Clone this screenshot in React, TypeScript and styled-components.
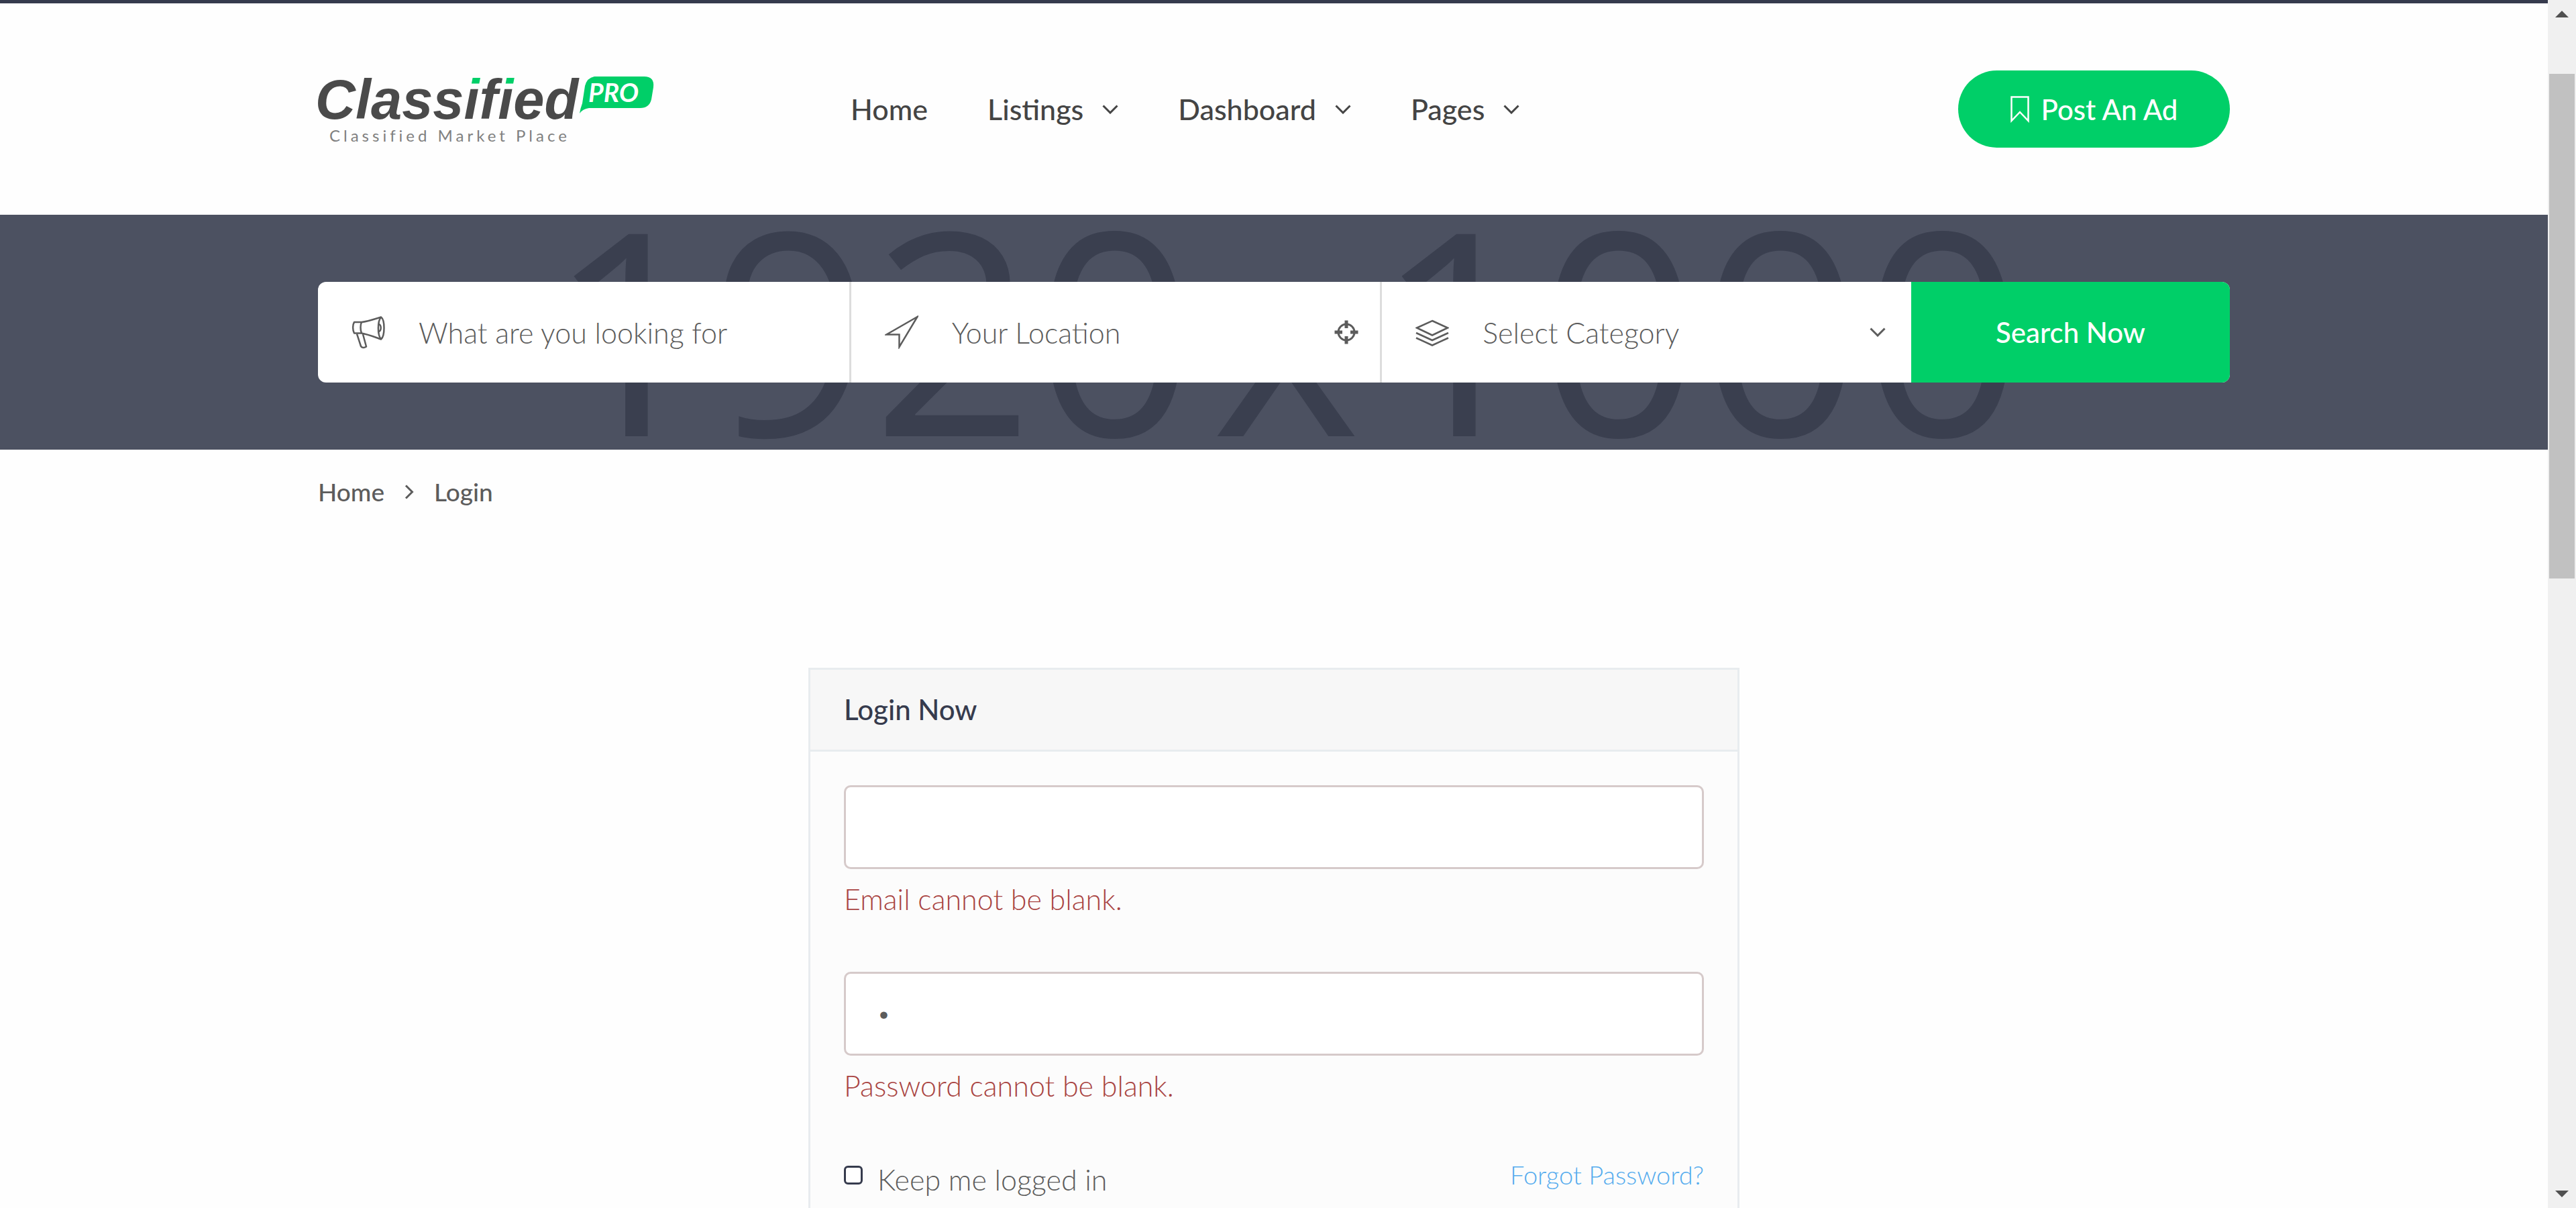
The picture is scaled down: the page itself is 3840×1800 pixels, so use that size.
import React from "react";
import styled, { createGlobalStyle } from "styled-components";

const colors = {
  green: "#00cf68",
  navy: "#363b4d",
  band: "#4c5161",
  bandText: "#3a3f4f",
  text: "#444444",
  muted: "#5c5c5c",
  danger: "#a94442",
  dangerBorder: "#d6caca",
  line: "#e8ecef",
  link: "#55acee",
};

const fontStack = '"Lato", "Open Sans", sans-serif';

const GlobalStyle = createGlobalStyle`
  *, *::before, *::after { box-sizing: border-box; }
  body {
    margin: 0;
    background: #fefefe;
    color: ${colors.muted};
    font-family: ${fontStack};
    font-size: 43px;
    font-weight: 300;
  }
  button, input, select { font: inherit; color: inherit; }
`;

const Shell = styled.div`
  display: flex;
  height: 100vh;
  overflow: hidden;
`;

const Page = styled.div`
  flex: 1;
  min-width: 0;
  height: 100%;
  overflow: hidden;
  border-top: 5px solid ${colors.navy};
`;

const Container = styled.div`
  width: calc(100% - 80px);
  max-width: 2850px;
  margin: 0 auto;
`;

const HeaderInner = styled(Container)`
  display: flex;
  align-items: center;
  padding: 100px 0;
`;

const LogoLink = styled.a`
  display: block;
  width: 500px;
  flex: none;
  margin-right: 294px;
  svg { display: block; width: 100%; overflow: visible; }
`;

const LogoName = styled.text`
  font-family: "Liberation Sans", sans-serif;
  font-weight: 700;
  font-style: italic;
  font-size: 83px;
  fill: #4a4a4a;
`;

const LogoBadge = styled.text`
  font-family: ${fontStack};
  font-weight: 700;
  font-style: italic;
  font-size: 39px;
  fill: #ffffff;
`;

const LogoTagline = styled.text`
  font-family: ${fontStack};
  font-weight: 400;
  font-size: 24px;
  letter-spacing: 5px;
  fill: #808080;
`;

const Nav = styled.nav`
  display: flex;
  gap: 89px;
  margin-right: auto;
`;

const NavLink = styled.a`
  display: flex;
  align-items: center;
  gap: 28px;
  color: ${colors.text};
  font-weight: 500;
  line-height: 60px;
  text-decoration: none;
`;

const PostButton = styled.button`
  display: flex;
  align-items: center;
  justify-content: center;
  gap: 18px;
  width: 405px;
  height: 115px;
  border: 0;
  border-radius: 60px;
  background: ${colors.green};
  color: #ffffff;
  font-size: 42px;
  font-weight: 500;
`;

const Band = styled.section`
  position: relative;
  padding: 100px 0;
  background: ${colors.band};
`;

const Backdrop = styled.div`
  position: absolute;
  inset: 0;
  display: flex;
  align-items: center;
  justify-content: center;
  gap: 24px;
  padding-left: 36px;
  padding-bottom: 16px;
  overflow: hidden;
  color: ${colors.bandText};
  font-family: "Open Sans", "Noto Sans", sans-serif;
  font-size: 422px;
  font-weight: 500;
  line-height: 350px;
`;

const SearchBar = styled(Container).attrs({ as: "form" })`
  position: relative;
  display: grid;
  grid-template-columns: 5fr 5fr 5fr 3fr;
  height: 150px;
  border-radius: 12px;
  overflow: hidden;
  background: #ffffff;
`;

const Field = styled.label<{ $end?: number }>`
  min-width: 0;
  height: 150px;
  display: flex;
  align-items: center;
  padding-left: 50px;
  padding-right: ${(p) => p.$end ?? 36}px;
  & + & { border-left: 3px solid #dddddd; }
`;

const fieldControl = `
  flex: 1;
  min-width: 0;
  height: 100%;
  margin-left: 50px;
  padding: 0;
  border: 0;
  outline: 0;
  background: transparent;
`;

const FieldInput = styled.input`
  ${fieldControl}
  &::placeholder { color: ${colors.muted}; opacity: 1; }
`;

const FieldSelect = styled.select`
  ${fieldControl}
  appearance: none;
`;

const LocateButton = styled.button`
  display: flex;
  padding: 0;
  border: 0;
  background: none;
`;

const SearchButton = styled.button`
  border: 0;
  background: ${colors.green};
  color: #ffffff;
  font-size: 42px;
  font-weight: 500;
`;

const Breadcrumb = styled(Container).attrs({ as: "nav" })`
  display: flex;
  align-items: center;
  gap: 30px;
  padding: 39px 0 41px;
  font-size: 37px;
  font-weight: 500;
  line-height: 48px;
`;

const Crumb = styled.a`
  color: ${colors.muted};
  text-decoration: none;
`;

const Card = styled.main`
  width: calc(100% - 80px);
  max-width: 1388px;
  margin: 197px auto 0;
  border: 3px solid ${colors.line};
  background: #fcfcfc;
`;

const CardTitle = styled.h1`
  margin: 0;
  padding: 30px 50px;
  border-bottom: 3px solid ${colors.line};
  background: #f7f7f7;
  color: ${colors.navy};
  font-size: 42px;
  font-weight: 500;
  line-height: 59px;
`;

const LoginForm = styled.form`
  display: flex;
  flex-direction: column;
  gap: 78px;
  padding: 50px 50px 200px;
`;

const FormGroup = styled.div`
  display: flex;
  flex-direction: column;
  gap: 15px;
`;

const TextBox = styled.input`
  width: 100%;
  height: 125px;
  padding: 0 46px 4px;
  border: 3px solid ${colors.dangerBorder};
  border-radius: 10px;
  outline: 0;
  background: #ffffff;
  font-size: 36px;
`;

const ErrorText = styled.p`
  margin: 0;
  color: ${colors.danger};
  line-height: 60px;
`;

const OptionsRow = styled.div`
  display: flex;
  justify-content: space-between;
  align-items: flex-start;
`;

const RememberLabel = styled.label`
  display: flex;
  align-items: flex-start;
  gap: 22px;
  line-height: 64px;
`;

const CheckBox = styled.input`
  appearance: none;
  width: 28px;
  height: 28px;
  margin: 11px 0 0;
  border: 3px solid ${colors.navy};
  border-radius: 6px;
  background: #ffffff;
`;

const ForgotLink = styled.a`
  color: ${colors.link};
  font-size: 38px;
  line-height: 48px;
  text-decoration: none;
`;

const ScrollRail = styled.div`
  flex: none;
  display: flex;
  flex-direction: column;
  align-items: center;
  justify-content: space-between;
  width: 42px;
  background: #f0f0f0;
`;

const RailTrack = styled.div`
  flex: 1;
  width: 38px;
  padding-top: 68px;
`;

const RailThumb = styled.div`
  height: 752px;
  background: #c1c1c1;
`;

const RailButton = styled.button`
  display: flex;
  align-items: center;
  justify-content: center;
  width: 42px;
  height: 42px;
  padding: 0;
  border: 0;
  background: none;
`;

const Chevron = ({ direction = "down" }: { direction?: "down" | "right" }) =>
  direction === "down" ? (
    <svg width="24" height="14" viewBox="0 0 24 14" fill="none" stroke="currentColor" strokeWidth="3" aria-hidden="true">
      <path d="M1.5 1.5 12 12 22.5 1.5" />
    </svg>
  ) : (
    <svg width="14" height="22" viewBox="0 0 14 22" fill="none" stroke="currentColor" strokeWidth="3" aria-hidden="true">
      <path d="M2 1.5 11.500 11 2 20.500" />
    </svg>
  );

const BookmarkIcon = () => (
  <svg width="28" height="40" viewBox="0 0 28 40" fill="none" stroke="currentColor" strokeWidth="2.500" aria-hidden="true">
    <path d="M1.500 1.500h25v35.500L14 24 1.500 37z" />
  </svg>
);

const MegaphoneIcon = () => (
  <svg width="50" height="50" viewBox="0 0 50 50" fill="none" stroke="currentColor" strokeWidth="2.500" strokeLinejoin="round" aria-hidden="true">
    <path d="M4 10C1.500 14 1.500 22 4 26.500L15 26.500C24 28 34 32 44 35.500C50 30 50 7 44 2.500C34 5.500 24 9 15 10Z" />
    <path d="M15 10C13 14 13 22 15 26.500M44 2.500C38.500 9 38.500 29 44 35.500M40 13C45 12.500 45 24.500 40 24" />
    <path d="M8 27.500 14 46C15.500 48.500 19 48.500 22 46.500L17 28" />
  </svg>
);

const PlaneIcon = () => (
  <svg width="50" height="50" viewBox="0 0 50 50" fill="none" stroke="currentColor" strokeWidth="2.500" aria-hidden="true">
    <path d="M48.500 2 2.500 28.500H21.500V47Z" />
  </svg>
);

const LayersIcon = () => (
  <svg width="50" height="50" viewBox="0 0 50 50" fill="none" stroke="currentColor" strokeWidth="2.500" aria-hidden="true">
    <path d="M25 8 48 18.500 25 29.500 2 18.500Z" />
    <path d="M1 26 25 37 49 26M1 33.500 25 44.500 49 33.500" />
  </svg>
);

const TargetIcon = () => (
  <svg width="36" height="36" viewBox="0 0 36 36" fill="none" stroke="currentColor" aria-hidden="true">
    <circle cx="18" cy="18" r="12" strokeWidth="3" />
    <path d="M18 0.500V12M18 24V35.500M0.500 18H12M24 18H35.500" strokeWidth="5" />
  </svg>
);

const Logo = () => (
  <svg viewBox="0 0 500 98" role="img" aria-label="Classified Pro">
    <defs>
      <linearGradient id="dotted" gradientUnits="userSpaceOnUse" x1="0" y1="0" x2="0" y2="98">
        <stop offset="0.150" stopColor={colors.green} />
        <stop offset="0.150" stopColor="#4a4a4a" />
      </linearGradient>
    </defs>
    <LogoName x="-4" y="63">
      Class<tspan fill="url(#dotted)">i</tspan>f<tspan fill="url(#dotted)">i</tspan>ed
    </LogoName>
    <path
      d="M412 0H486Q502 0 500 16L497 34Q494 47 480 47H404Q395 48 390 55Q391 48 394 40L398 14Q401 2 412 0Z"
      fill={colors.green}
    />
    <LogoBadge x="403" y="38">PRO</LogoBadge>
    <LogoTagline x="17" y="97">Classified Market Place</LogoTagline>
  </svg>
);

const menu = [
  { label: "Home", hasMenu: false },
  { label: "Listings", hasMenu: true },
  { label: "Dashboard", hasMenu: true },
  { label: "Pages", hasMenu: true },
];

export default function App() {
  return (
    <>
      <GlobalStyle />
      <Shell>
        <Page>
          <header>
            <HeaderInner>
              <LogoLink href="#">
                <Logo />
              </LogoLink>
              <Nav>
                {menu.map((item) => (
                  <NavLink key={item.label} href="#">
                    {item.label}
                    {item.hasMenu && <Chevron />}
                  </NavLink>
                ))}
              </Nav>
              <PostButton type="button">
                <BookmarkIcon />
                Post An Ad
              </PostButton>
            </HeaderInner>
          </header>

          <Band>
            <Backdrop aria-hidden="true">
              <span>1920</span>
              <span>x</span>
              <span>1000</span>
            </Backdrop>
            <SearchBar>
              <Field>
                <MegaphoneIcon />
                <FieldInput type="text" placeholder="What are you looking for" aria-label="What are you looking for" />
              </Field>
              <Field $end={32}>
                <PlaneIcon />
                <FieldInput type="text" placeholder="Your Location" aria-label="Your Location" />
                <LocateButton type="button" aria-label="Use my location">
                  <TargetIcon />
                </LocateButton>
              </Field>
              <Field $end={38}>
                <LayersIcon />
                <FieldSelect aria-label="Category" defaultValue="">
                  <option value="">Select Category</option>
                </FieldSelect>
                <Chevron />
              </Field>
              <SearchButton type="submit">Search Now</SearchButton>
            </SearchBar>
          </Band>

          <Breadcrumb aria-label="Breadcrumb">
            <Crumb href="#">Home</Crumb>
            <Chevron direction="right" />
            <Crumb href="#">Login</Crumb>
          </Breadcrumb>

          <Card>
            <CardTitle>Login Now</CardTitle>
            <LoginForm>
              <FormGroup>
                <TextBox type="email" aria-label="Email" aria-describedby="email-error" />
                <ErrorText id="email-error">Email cannot be blank.</ErrorText>
              </FormGroup>
              <FormGroup>
                <TextBox type="password" aria-label="Password" aria-describedby="password-error" defaultValue="a" />
                <ErrorText id="password-error">Password cannot be blank.</ErrorText>
              </FormGroup>
              <OptionsRow>
                <RememberLabel>
                  <CheckBox type="checkbox" />
                  Keep me logged in
                </RememberLabel>
                <ForgotLink href="#">Forgot Password?</ForgotLink>
              </OptionsRow>
            </LoginForm>
          </Card>
        </Page>

        <ScrollRail>
          <RailButton type="button" aria-label="Scroll up">
            <svg width="20" height="10" viewBox="0 0 20 10" fill="#505050" aria-hidden="true">
              <path d="M10 0 20 10H0Z" />
            </svg>
          </RailButton>
          <RailTrack>
            <RailThumb />
          </RailTrack>
          <RailButton type="button" aria-label="Scroll down">
            <svg width="20" height="10" viewBox="0 0 20 10" fill="#505050" aria-hidden="true">
              <path d="M0 0H20L10 10Z" />
            </svg>
          </RailButton>
        </ScrollRail>
      </Shell>
    </>
  );
}
